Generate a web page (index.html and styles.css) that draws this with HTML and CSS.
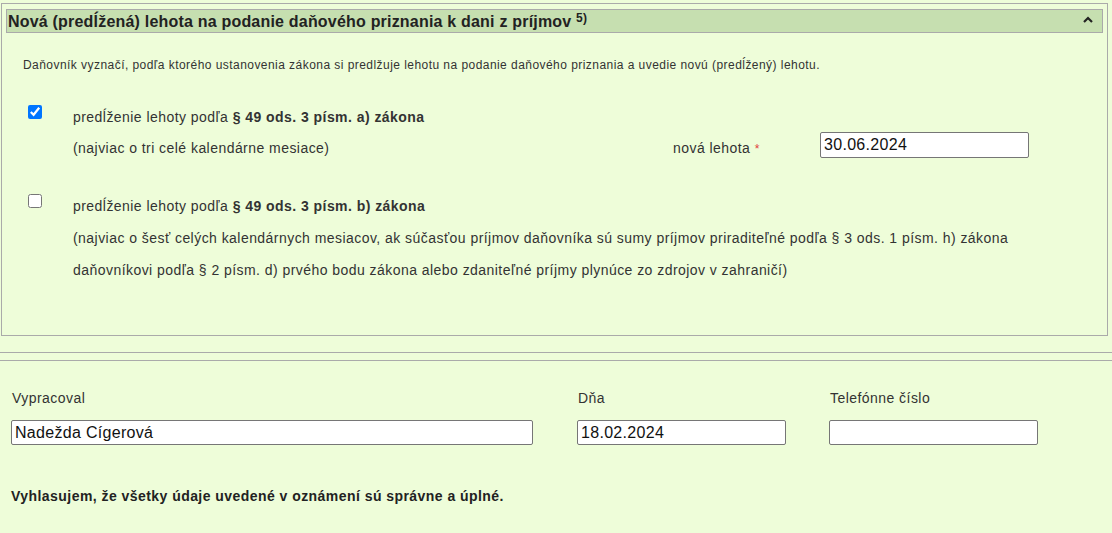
FILE: index.html
```html
<!DOCTYPE html>
<html lang="sk">
<head>
    <meta charset="UTF-8">
    <meta name="viewport" content="width=device-width, initial-scale=1.0">
    <title>Nová lehota</title>
    <link rel="stylesheet" href="styles.css">
</head>
<body>
    <!-- sekcia: nová lehota -->
    <div class="section">
        <div class="section-head">
            <span class="section-title">Nová (predĺžená) lehota na podanie daňového priznania k dani z príjmov <sup>5)</sup></span>
            <svg class="caret" width="10" height="7" viewBox="0 0 10 7"><path d="M1 6 L5 2 L9 6" fill="none" stroke="#222" stroke-width="2.2"/></svg>
        </div>

        <p class="hint">Daňovník vyznačí, podľa ktorého ustanovenia zákona si predlžuje lehotu na podanie daňového priznania a uvedie novú (predĺžený) lehotu.</p>

        <div class="option option-a">
            <input type="checkbox" class="check" checked>
            <div class="opt-line">predĺženie lehoty podľa <b>§ 49 ods. 3 písm. a) zákona</b></div>
            <div class="opt-line opt-note">(najviac o tri celé kalendárne mesiace)</div>
            <div class="opt-label">nová lehota <span class="req">*</span></div>
            <input type="text" class="field date-field" value="30.06.2024">
        </div>

        <div class="option option-b">
            <input type="checkbox" class="check">
            <div class="opt-line">predĺženie lehoty podľa <b>§ 49 ods. 3 písm. b) zákona</b></div>
            <div class="opt-line opt-note">(najviac o šesť celých kalendárnych mesiacov, ak súčasťou príjmov daňovníka sú sumy príjmov priraditeľné podľa § 3 ods. 1 písm. h) zákona<br>daňovníkovi podľa § 2 písm. d) prvého bodu zákona alebo zdaniteľné príjmy plynúce zo zdrojov v zahraničí)</div>
        </div>
    </div>

    <div class="divider"></div>

    <!-- podpis -->
    <div class="signature">
        <div class="sig-col">
            <label for="author">Vypracoval</label>
            <input type="text" id="author" class="field wide" value="Nadežda Cígerová">
        </div>
        <div class="sig-col">
            <label for="day">Dňa</label>
            <input type="text" id="day" class="field" value="18.02.2024">
        </div>
        <div class="sig-col">
            <label for="phone">Telefónne číslo</label>
            <input type="text" id="phone" class="field" value="">
        </div>
    </div>

    <p class="statement">Vyhlasujem, že všetky údaje uvedené v oznámení sú správne a úplné.</p>
</body>
</html>
```

FILE: styles.css
```css
body {
    margin: 0;
    background-color: #eefdd9;
    font-family: 'Liberation Sans', Arial, sans-serif;
    font-size: 14px;
    letter-spacing: 0.45px;
    color: #333;
}

.section {
    margin: 3px 4px 0 1px;
    border: 1px solid #aaa;
    padding: 5px 4px 49px 4px;
}

.section-head {
    display: flex;
    align-items: center;
    justify-content: space-between;
    height: 22px;
    border: 1px solid #aaa;
    background-color: #c6dfb0;
    padding: 0 9px 0 1px;
}

.section-title {
    font-size: 16px;
    letter-spacing: 0.2px;
    font-weight: bold;
    color: #222;
}

.section-title sup {
    font-size: 12px;
    vertical-align: 5px;
}

.caret {
    margin-top: -3px;
}

.hint {
    margin: 24px 0 0 17px;
    font-size: 12px;
    line-height: 16px;
}

.option {
    display: grid;
    grid-template-columns: 67px 600px 147px 209px;
    line-height: 31px;
    margin-top: 29px;
}

.option-b {
    line-height: 32px;
    margin-top: 25px;
}

.check {
    grid-row: 1;
    grid-column: 1;
    margin: 3px 0 0 22px;
    width: 14px;
    height: 14px;
    align-self: start;
}

.option-b .check {
    margin-top: 4px;
}

.opt-line {
    grid-column: 2;
}

.option-b .opt-line {
    grid-column: 2 / span 3;
    white-space: nowrap;
}

.opt-label {
    grid-column: 3;
    grid-row: 2;
}

.req {
    color: #e04040;
    font-size: 12px;
}

.field {
    box-sizing: border-box;
    width: 209px;
    height: 25px;
    border: 1px solid #767676;
    border-radius: 2px;
    background-color: #fff;
    font-family: 'Liberation Sans', Arial, sans-serif;
    font-size: 16px;
    letter-spacing: 0.3px;
    color: #111;
    padding: 0 3px;
}

.date-field {
    grid-column: 4;
    grid-row: 2;
    height: 26px;
    margin-top: -1px;
}

.divider {
    margin-top: 16px;
    height: 7px;
    border-top: 1px solid #aaa;
    border-bottom: 1px solid #aaa;
}

.signature {
    display: grid;
    grid-template-columns: 566px 252px 209px;
    padding-left: 11px;
    margin-top: 29px;
}

.sig-col label {
    display: block;
    line-height: 16px;
    padding-left: 1px;
    margin-bottom: 14px;
}

.field.wide {
    width: 522px;
}

.statement {
    margin: 43px 0 0 11px;
    font-weight: bold;
    line-height: 16px;
    color: #222;
}
```
